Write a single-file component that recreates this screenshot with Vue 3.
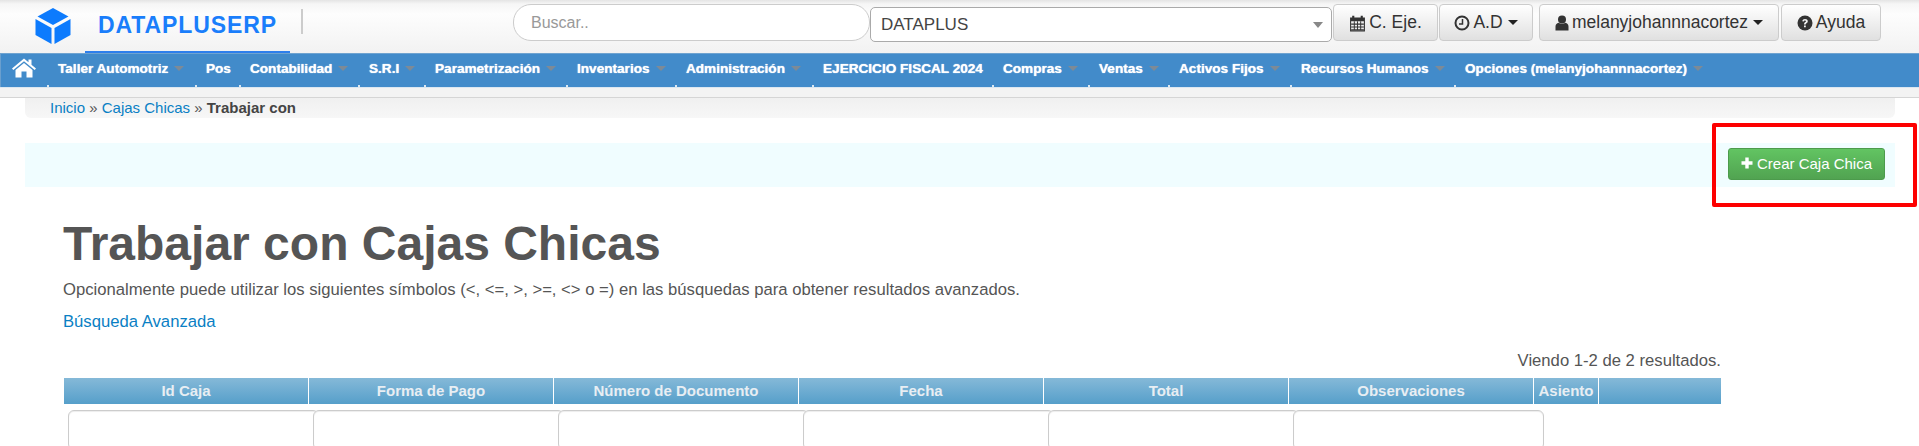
<template>
  <div class="page">
    <header class="topbar">
      <div class="brand">
        <svg class="cube" viewBox="0 0 36 36" width="36" height="36">
          <path d="M18 0 L33.5 8.5 L18 17 L2.5 8.5 Z" fill="#0d7bfd" />
          <path d="M0.5 11 L16.5 20 L16.5 36 L0.5 27 Z" fill="#0d7bfd" />
          <path d="M35.5 11 L19.5 20 L19.5 36 L35.5 27 Z" fill="#0d7bfd" />
        </svg>
        <span class="brand-name">DATAPLUSERP</span>
      </div>
      <span class="brand-sep"></span>
      <input class="search" type="text" placeholder="Buscar.." />
      <div class="select">
        <span>DATAPLUS</span>
        <i class="select-arrow"></i>
      </div>
      <button class="btn btn-cal" type="button">
        <svg class="ico" viewBox="0 0 16 16" width="17" height="18" preserveAspectRatio="none">
          <path fill="#333" fill-rule="evenodd" d="M1 3h2V1.500h2V3h6V1.500h2V3h2v12.500H1V3Zm1 3.500v8h12v-8H2Z" />
          <path stroke="#333" stroke-width="0.9" fill="none" d="M2 9h12M2 11.500h12M2 14h12M5 6.500v8M8 6.500v8M11 6.500v8" />
        </svg>
        C. Eje.
      </button>
      <button class="btn btn-ad" type="button">
        <svg class="ico" viewBox="0 0 16 16" width="16" height="16">
          <circle cx="8" cy="8" r="6.500" fill="none" stroke="#333" stroke-width="2" />
          <path d="M8.500 4v5H5" fill="none" stroke="#333" stroke-width="1.500" />
        </svg>
        A.D
        <i class="caret"></i>
      </button>
      <button class="btn btn-user" type="button">
        <svg class="ico" viewBox="0 0 14 16" width="14" height="16">
          <circle cx="7" cy="4.500" r="4" fill="#333" />
          <path d="M0.500 15.500v-4C0.500 9.500 2 8 3.500 7.800c2 1.400 5 1.400 7 0 1.500.2 3 1.700 3 3.700v4Z" fill="#333" />
        </svg>
        melanyjohannnacortez
        <i class="caret"></i>
      </button>
      <button class="btn btn-help" type="button">
        <svg class="ico" viewBox="0 0 16 16" width="16" height="16">
          <circle cx="8" cy="8" r="7.500" fill="#333" />
          <path d="M5.300 6.200C5.500 4.700 6.600 4 8 4c1.600 0 2.800.9 2.800 2.300 0 2-2.100 1.900-2.100 3.200H7c0-2.400 2-2.300 2-3.300 0-.5-.4-.8-1-.8s-1 .3-1.200 1.100ZM7 10.500h1.800v1.800H7Z" fill="#f2f2f2" />
        </svg>
        Ayuda
      </button>
    </header>

    <nav class="menu">
      <span class="home">
        <svg viewBox="0 0 24 20" width="24" height="20">
          <path d="M12 0.500 L16.500 4.300 V1.500 H19.500 V6.800 L24 10.600 L22.700 12.100 L12 3.200 L1.300 12.100 L0 10.600 Z" fill="#fff" />
          <path d="M12 5 L20.500 12 V19.500 H14.500 V13.500 H9.500 V19.500 H3.500 V12 Z" fill="#fff" />
        </svg>
      </span>
      <a v-for="item in menu" :key="item.label" class="menu-item" :style="{ width: item.w + 'px' }">
        {{ item.label }}<i v-if="item.sub" class="menu-caret"></i>
      </a>
    </nav>
    <div class="menu-gap"></div>

    <div class="crumbs">
      <a>Inicio</a> » <a>Cajas Chicas</a> » <b>Trabajar con</b>
    </div>

    <div class="actions">
      <button class="btn-create" type="button">
        <svg viewBox="0 0 12 12" width="12" height="12">
          <path d="M4.300 0.500h3.400v3.800h3.800v3.400H7.700v3.800H4.300V7.700H0.500V4.300h3.800Z" fill="#fff" />
        </svg>
        Crear Caja Chica
      </button>
      <div class="marker"></div>
    </div>

    <main class="content">
      <h1>Trabajar con Cajas Chicas</h1>
      <p class="hint">Opcionalmente puede utilizar los siguientes símbolos (&lt;, &lt;=, &gt;, &gt;=, &lt;&gt; o =) en las búsquedas para obtener resultados avanzados.</p>
      <a class="advanced">Búsqueda Avanzada</a>
      <div class="summary">Viendo 1-2 de 2 resultados.</div>
      <div class="grid-head">
        <div v-for="col in columns" :key="col">{{ col }}</div>
      </div>
      <div class="grid-filters">
        <div v-for="n in 6" :key="n" class="filter-cell"><input type="text" /></div>
      </div>
    </main>
  </div>
</template>

<script setup>
const menu = [
  { label: 'Taller Automotriz', w: 148, sub: true },
  { label: 'Pos', w: 44 },
  { label: 'Contabilidad', w: 119, sub: true },
  { label: 'S.R.I', w: 66, sub: true },
  { label: 'Parametrización', w: 142, sub: true },
  { label: 'Inventarios', w: 109, sub: true },
  { label: 'Administración', w: 137, sub: true },
  { label: 'EJERCICIO FISCAL 2024', w: 180 },
  { label: 'Compras', w: 96, sub: true },
  { label: 'Ventas', w: 80, sub: true },
  { label: 'Activos Fijos', w: 122, sub: true },
  { label: 'Recursos Humanos', w: 164, sub: true },
  { label: 'Opciones (melanyjohannnacortez)', w: 263, sub: true },
]

const columns = ['Id Caja', 'Forma de Pago', 'Número de Documento', 'Fecha', 'Total', 'Observaciones', 'Asiento', '']
</script>

<style scoped>
.page {
  width: 1919px;
  height: 446px;
  overflow: hidden;
  background: #fff;
  font-family: "Liberation Sans", Arial, sans-serif;
  color: #555;
}

/* BARRA SUPERIOR */
.topbar {
  height: 53px;
  box-sizing: border-box;
  display: flex;
  align-items: flex-start;
  padding-top: 4px;
  background: linear-gradient(to bottom, #e4e4e4 0, #f6f6f6 4px, #fdfdfd 14px, #f2f2f2 100%);
}

.brand {
  width: 205px;
  height: 49px;
  margin-left: 85px;
  box-sizing: border-box;
  border-bottom: 2px solid #2e7fec;
  display: flex;
  align-items: flex-start;
  position: relative;
}

.cube {
  position: absolute;
  left: -50px;
  top: 4px;
}

.brand-name {
  margin: 8px 0 0 13px;
  font-size: 23px;
  line-height: 26px;
  font-weight: bold;
  letter-spacing: 0.9px;
  color: #1a7efb;
}

.brand-sep {
  width: 2px;
  height: 25px;
  margin: 5px 0 0 11px;
  background: #ccc;
}

.search {
  width: 357px;
  height: 37px;
  margin-left: 210px;
  box-sizing: border-box;
  padding: 0 17px;
  border: 1px solid #ccc;
  border-radius: 18px;
  background: #fff;
  font: 16px "Liberation Sans", Arial, sans-serif;
  outline: none;
}

.search::placeholder {
  color: #999;
}

.select {
  width: 462px;
  height: 35px;
  margin: 3px 0 0 0;
  box-sizing: border-box;
  padding: 0 10px;
  display: flex;
  align-items: center;
  justify-content: space-between;
  border: 1px solid #aaa;
  border-radius: 5px;
  background: #fff;
  font-size: 17px;
  color: #444;
}

.select-arrow {
  width: 0;
  height: 0;
  margin-right: -2px;
  border-left: 5px solid transparent;
  border-right: 5px solid transparent;
  border-top: 6px solid #888;
}

.btn {
  height: 37px;
  box-sizing: border-box;
  padding: 0;
  display: flex;
  align-items: center;
  justify-content: center;
  gap: 3px;
  border: 1px solid #ccc;
  border-radius: 4px;
  background: linear-gradient(to bottom, #fff 0, #e0e0e0 100%);
  font: 17.5px "Liberation Sans", Arial, sans-serif;
  color: #333;
}

.btn-cal {
  width: 105px;
  margin-left: 1px;
}

.btn-ad {
  width: 94px;
  margin-left: 1px;
}

.btn-user {
  width: 240px;
  margin-left: 6px;
}

.btn-help {
  width: 100px;
  margin-left: 2px;
}

.caret {
  width: 0;
  height: 0;
  margin-left: 2px;
  border-left: 5px solid transparent;
  border-right: 5px solid transparent;
  border-top: 5px solid #222;
}

/* MENU */
.menu {
  height: 34px;
  display: flex;
  align-items: center;
  background: #428bca;
  border-left: 1px solid #6a9fce;
  border-top: 1px solid #6fa3d0;
  box-sizing: border-box;
}

.home {
  width: 46px;
  display: flex;
  padding: 0 0 5px 11px;
  box-sizing: border-box;
}

.menu-item {
  box-sizing: border-box;
  height: 33px;
  padding: 0 0 5px 11px;
  display: flex;
  align-items: center;
  white-space: nowrap;
  font-size: 13.6px;
  font-weight: bold;
  color: #fff;
  text-shadow: 0 0 1px #fff;
  position: relative;
}

/* marquita blanca abajo de cada item */
.menu-item::after {
  content: "";
  position: absolute;
  left: 0;
  bottom: 0;
  width: 2px;
  height: 2px;
  background: #dbe8f3;
}

.menu-caret {
  width: 0;
  height: 0;
  margin-left: 6px;
  border-left: 5px solid transparent;
  border-right: 5px solid transparent;
  border-top: 5px solid #7d8a96;
}

.menu-gap {
  height: 11px;
  box-sizing: border-box;
  background: #f3f3f3;
  border-top: 1px solid #dbe7f1;
  border-bottom: 1px solid #d5d5d5;
}

/* MIGAS */
.crumbs {
  height: 20px;
  margin: 0 24px 0 25px;
  padding-left: 25px;
  border-radius: 0 0 6px 6px;
  background: linear-gradient(to bottom, #f0f0f0, #f7f7f7);
  font-size: 15px;
  line-height: 19px;
  color: #555;
}

.crumbs a {
  color: #0a7fc4;
}

.crumbs b {
  color: #444;
}

/* BANDA DE ACCIONES */
.actions {
  height: 44px;
  margin: 25px 24px 0 25px;
  display: flex;
  justify-content: flex-end;
  align-items: flex-start;
  background: #f0fdff;
  position: relative;
}

.btn-create {
  width: 157px;
  height: 32px;
  margin: 5px 10px 0 0;
  padding: 0 0 2px 0;
  display: flex;
  align-items: center;
  justify-content: center;
  gap: 4px;
  border: 1px solid #4c9b4c;
  border-radius: 3px;
  background: linear-gradient(to bottom, #62c462, #51a351);
  font: 15px "Liberation Sans", Arial, sans-serif;
  color: #fff;
}

.marker {
  position: absolute;
  left: 1687px;
  top: -20px;
  width: 205px;
  height: 84px;
  box-sizing: border-box;
  border: 4px solid #fd0000;
  border-radius: 2px;
}

/* CONTENIDO */
.content {
  padding: 0 198px 0 63px;
}

h1 {
  margin: 27px 0 0 0;
  font-size: 48px;
  line-height: 60px;
  font-weight: bold;
  color: #555;
}

.hint {
  margin: 6px 0 0 0;
  font-size: 16.67px;
  line-height: 20px;
  color: #555;
}

.advanced {
  display: block;
  margin-top: 12px;
  font-size: 16.67px;
  line-height: 20px;
  color: #0a7fc4;
}

.summary {
  margin-top: 19px;
  text-align: right;
  font-size: 16.67px;
  line-height: 20px;
  color: #555;
}

.grid-head {
  margin: 7px 0 0 1px;
  height: 26px;
  display: grid;
  grid-template-columns: 245px 245px 245px 245px 245px 245px 65px 1fr;
  background: linear-gradient(to bottom, #85b9d8, #569fca);
}

.grid-head div {
  box-sizing: border-box;
  border-right: 1px solid #fff;
  text-align: center;
  font-size: 15px;
  line-height: 26px;
  font-weight: bold;
  color: #e8eef3;
}

.grid-head div:last-child {
  border-right: none;
}

.grid-filters {
  display: flex;
  margin: 6px 0 0 1px;
}

.filter-cell {
  width: 245px;
  padding-left: 4px;
  box-sizing: border-box;
}

.filter-cell input {
  display: block;
  width: 251px;
  height: 40px;
  box-sizing: border-box;
  border: 1px solid #ccc;
  border-radius: 6px;
  background: #fff;
  box-shadow: inset 0 1px 1px rgba(0, 0, 0, 0.075);
}
</style>

<style>
html, body {
  margin: 0;
  background: #fff;
  overflow: hidden;
}
</style>
